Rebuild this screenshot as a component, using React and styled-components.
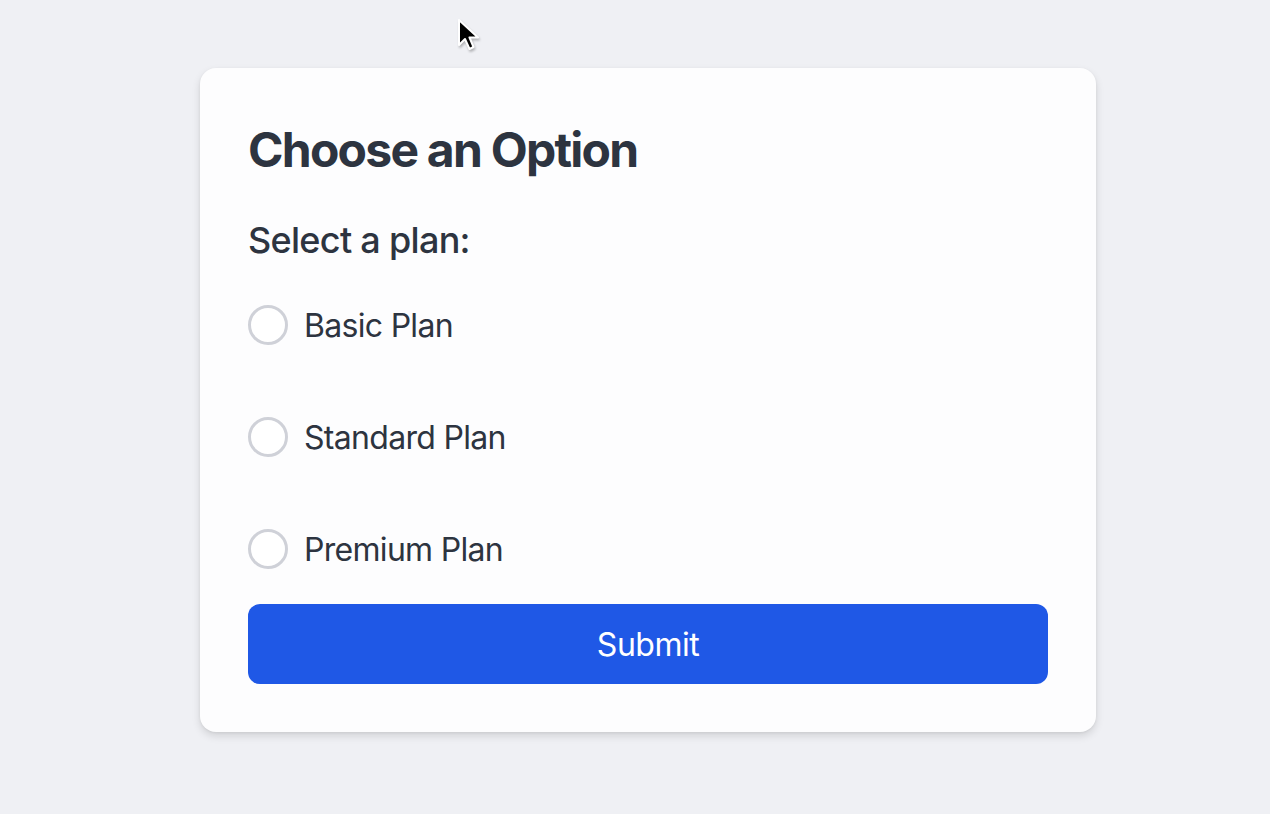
import styled, { createGlobalStyle } from 'styled-components';

const GlobalStyle = createGlobalStyle`
  html, body {
    margin: 0;
    padding: 0;
    background: #eff0f4;
    font-family: Inter, "Noto Sans", "Liberation Sans", sans-serif;
  }
  #root {
    min-height: 100vh;
  }
`;

const Page = styled.div`
  position: relative;
  min-height: 814px;
  padding: 68px 0 0 200px;
  box-sizing: border-box;
`;

const Cursor = styled.svg`
  position: absolute;
  left: 456px;
  top: 18px;
  filter: drop-shadow(1px 2px 1px rgba(0, 0, 0, 0.25));
`;

const Card = styled.form`
  width: 896px;
  box-sizing: border-box;
  padding: 48px;
  background: #fdfdfe;
  border-radius: 16px;
  box-shadow: 0 4px 8px rgba(0, 0, 0, 0.12), 0 1px 3px rgba(0, 0, 0, 0.06);
`;

const Title = styled.h1`
  margin: 0 0 32px;
  padding-top: 2px;
  height: 62px;
  font-size: 48px;
  line-height: 64px;
  font-weight: 700;
  letter-spacing: -1.75px;
  color: #2d3440;
`;

const Subtitle = styled.h2`
  margin: 0;
  font-size: 36px;
  line-height: 56px;
  font-weight: 500;
  letter-spacing: -0.7px;
  color: #2d3440;
`;

const RadioList = styled.div`
  display: flex;
  flex-direction: column;
  gap: 64px;
  margin: 32px 0;
`;

const Row = styled.label`
  display: flex;
  align-items: center;
  gap: 16px;
  height: 48px;
  cursor: pointer;
`;

const Circle = styled.input`
  appearance: none;
  margin: 2px 0 0;
  width: 40px;
  height: 40px;
  box-sizing: border-box;
  border: 3px solid #cfd1d8;
  border-radius: 50%;
  background: #fff;
`;

const LabelText = styled.span`
  padding-top: 3px;
  font-size: 32px;
  line-height: 48px;
  letter-spacing: -0.7px;
  color: #2d3440;
`;

const SubmitButton = styled.button`
  display: block;
  width: 100%;
  height: 80px;
  border: none;
  border-radius: 12px;
  background: #1f58e6;
  color: #fff;
  font-family: inherit;
  font-size: 32px;
  letter-spacing: -0.5px;
`;

const plans = ['Basic Plan', 'Standard Plan', 'Premium Plan'];

const App = () => (
  <>
    <GlobalStyle />
    <Page>
      <Cursor width="24" height="36" viewBox="0 0 24 36">
        <path d="M3 2 L3 27 L9 21 L13.5 31 L17.5 29 L13.5 19.5 L22 19.5 Z" fill="#000" stroke="#fff" strokeWidth="2" strokeLinejoin="round" />
      </Cursor>
      <Card onSubmit={(e) => e.preventDefault()}>
        <Title>Choose an Option</Title>
        <Subtitle>Select a plan:</Subtitle>
        <RadioList>
          {plans.map((p) => (
            <Row key={p}>
              <Circle type="radio" name="plan" value={p} />
              <LabelText>{p}</LabelText>
            </Row>
          ))}
        </RadioList>
        <SubmitButton type="submit">Submit</SubmitButton>
      </Card>
    </Page>
  </>
);

export default App;
